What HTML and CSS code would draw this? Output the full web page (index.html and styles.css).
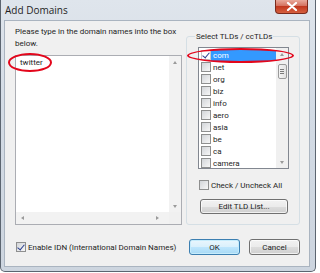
FILE: index.html
```html
<!DOCTYPE html>
<html lang="en">
<head>
  <meta charset="UTF-8">
  <meta name="viewport" content="width=device-width, initial-scale=1.0">
  <title>Add Domains</title>
  <link rel="stylesheet" href="styles.css">
</head>
<body>
  <!-- Dialog Window -->
  <div class="window">
    <div class="title-bar">
      <span class="title">Add Domains</span>
      <span class="close-btn">
        <svg width="12" height="9" viewBox="0 0 12 9"><path d="M2 1 L10 8 M10 1 L2 8" stroke="#fff" stroke-width="2.2" stroke-linecap="round"/></svg>
      </span>
    </div>

    <div class="client">
      <div class="main">
        <!-- Domain names -->
        <div class="left-col">
          <p class="hint">Please type in the domain names into the box below.</p>
          <div class="textbox">
            <div class="text-area">
              <div class="text-lines">twitter</div>
              <div class="vscroll">
                <span class="arrow up"></span>
                <span class="arrow down"></span>
              </div>
            </div>
            <div class="hscroll">
              <span class="arrow left"></span>
              <span class="arrow right"></span>
              <span class="corner"></span>
            </div>
          </div>
          <span class="mark mark-twitter"></span>
        </div>

        <!-- TLD group -->
        <div class="group">
          <span class="group-title">Select TLDs / ccTLDs</span>
          <div class="listbox">
            <ul class="tld-list">
              <li class="selected"><span class="check checked"></span><span class="tld">com</span></li>
              <li><span class="check"></span><span class="tld">net</span></li>
              <li><span class="check"></span><span class="tld">org</span></li>
              <li><span class="check"></span><span class="tld">biz</span></li>
              <li><span class="check"></span><span class="tld">info</span></li>
              <li><span class="check"></span><span class="tld">aero</span></li>
              <li><span class="check"></span><span class="tld">asia</span></li>
              <li><span class="check"></span><span class="tld">be</span></li>
              <li><span class="check"></span><span class="tld">ca</span></li>
              <li><span class="check"></span><span class="tld">camera</span></li>
              <li><span class="check"></span><span class="tld">cat</span></li>
            </ul>
            <div class="list-scroll">
              <span class="arrow up"></span>
              <span class="thumb"><i></i><i></i><i></i></span>
              <span class="arrow down"></span>
            </div>
          </div>
          <label class="check-row"><span class="check"></span>Check / Uncheck All</label>
          <button class="btn btn-edit">Edit TLD List...</button>
          <span class="mark mark-com"></span>
        </div>
      </div>

      <div class="bottom">
        <label class="check-row idn"><span class="check checked"></span>Enable IDN (International Domain Names)</label>
        <div class="actions">
          <button class="btn btn-default">OK</button>
          <button class="btn">Cancel</button>
        </div>
      </div>
    </div>
  </div>
</body>
</html>
```

FILE: styles.css
```css
/* General Styles */
body {
  margin: 0;
  padding: 0;
  background-color: #fff;
  font-family: Roboto, "Noto Sans", sans-serif;
  font-size: 8px;
  color: #1e1e1e;
}

/* Window Frame */
.window {
  width: 316px;
  height: 272px;
  box-sizing: border-box;
  background: linear-gradient(#dfe5ec, #d3dbe5 40%, #cdd5df);
  border: 1px solid #5c6570;
  border-top: none;
  border-radius: 0 0 5px 5px;
  display: flex;
  flex-direction: column;
  padding: 0 5px 4px 3px;
}

.title-bar {
  height: 20px;
  display: flex;
  justify-content: space-between;
  align-items: flex-start;
  flex-shrink: 0;
}

.title {
  font-family: "Open Sans", sans-serif;
  font-size: 10px;
  color: #1f1f1f;
  padding: 3px 0 0 1px;
}

.close-btn {
  width: 33px;
  height: 14px;
  margin-right: 2px;
  box-sizing: border-box;
  display: flex;
  justify-content: center;
  align-items: center;
  border: 1px solid #7a2a1c;
  border-top: none;
  border-radius: 0 0 4px 4px;
  background: linear-gradient(#e9a99b, #d4725f 45%, #c2381f 50%, #d5603f);
}

/* Client Area */
.client {
  flex: 1;
  background-color: #f0f0f0;
  border: 1px solid #aab4c0;
  display: flex;
  flex-direction: column;
  padding: 5px 9px 0 10px;
}

.main {
  display: flex;
  gap: 4px;
}

.left-col {
  width: 167px;
  position: relative;
}

.hint {
  margin: 0;
  width: 172px;
  line-height: 12px;
  height: 29px;
}

/* Text Box */
.textbox {
  height: 168px;
  border: 1px solid #abadb3;
  background: #fff;
  display: flex;
  flex-direction: column;
}

.text-area {
  flex: 1;
  display: flex;
}

.text-lines {
  flex: 1;
  padding: 2px 0 0 4px;
}

.vscroll {
  width: 12px;
  background: #f2f2f2;
  display: flex;
  flex-direction: column;
  justify-content: space-between;
  align-items: center;
  padding: 5px 0 4px;
}

.hscroll {
  height: 12px;
  background: #f2f2f2;
  display: flex;
  align-items: center;
  padding-left: 5px;
}

.hscroll .right {
  margin-left: auto;
  margin-right: 10px;
}

.hscroll .corner {
  width: 12px;
  height: 12px;
  background: #f0f0f0;
}

.arrow {
  width: 0;
  height: 0;
  border: 2px solid transparent;
}

.arrow.up { border-bottom: 3px solid #9a9a9a; border-top: 0; }
.arrow.down { border-top: 3px solid #9a9a9a; border-bottom: 0; }
.arrow.left { border-right: 3px solid #9a9a9a; border-left: 0; }
.arrow.right { border-left: 3px solid #9a9a9a; border-right: 0; }

/* TLD Group */
.group {
  flex: 1;
  margin-top: 10px;
  height: 189px;
  box-sizing: border-box;
  padding: 0 9px 0 11px;
  border: 1px solid #d5dfe5;
  border-radius: 3px;
  position: relative;
  display: flex;
  flex-direction: column;
  align-items: flex-start;
}

.group-title {
  background: #f0f0f0;
  padding: 0 1px;
  margin: -6px 0 0 -3px;
  line-height: 11px;
}

.listbox {
  width: 89px;
  height: 120px;
  border: 1px solid #828790;
  background: #fff;
  display: flex;
  margin-top: 5px;
}

.tld-list {
  list-style: none;
  margin: 0;
  padding: 1px 0 0;
  flex: 1;
  overflow: hidden;
}

.tld-list li {
  height: 12px;
  display: flex;
  align-items: center;
  padding-left: 2px;
}

.tld {
  flex: 1;
  padding-left: 2px;
  line-height: 11px;
}

.tld-list li.selected .tld {
  background: #3399ff;
  color: #fff;
}

.list-scroll {
  width: 12px;
  background: #f0f0f0;
  display: flex;
  flex-direction: column;
  align-items: center;
  padding: 5px 0 4px;
}

.list-scroll .thumb {
  width: 9px;
  height: 15px;
  box-sizing: border-box;
  margin-top: 8px;
  border: 1px solid #9a9a9a;
  border-radius: 2px;
  background: linear-gradient(90deg, #f4f4f4, #e2e2e2);
  display: flex;
  flex-direction: column;
  justify-content: center;
  align-items: center;
  gap: 1px;
}

.list-scroll .thumb i {
  width: 4px;
  height: 1px;
  background: #7a7a7a;
}

.list-scroll .down {
  margin-top: auto;
}

/* Checkboxes */
.check {
  width: 10px;
  height: 10px;
  box-sizing: border-box;
  border: 1px solid #8e8f8f;
  background: linear-gradient(135deg, #d2d5d9, #f7f7f7);
  flex-shrink: 0;
  position: relative;
}

.check.checked::after {
  content: "";
  position: absolute;
  left: 2px;
  top: 0;
  width: 3px;
  height: 6px;
  border: solid #2a3f8f;
  border-width: 0 1.5px 1.5px 0;
  transform: rotate(40deg);
}

.tld-list li.selected .check {
  border-color: #c8c8c8;
  background: #fff;
}

.check-row {
  display: flex;
  align-items: center;
  gap: 2px;
  white-space: nowrap;
}

.group .check-row {
  margin: 11px 0 0 1px;
}

/* Buttons */
.btn {
  font-family: inherit;
  font-size: 8px;
  color: #1e1e1e;
  height: 16px;
  padding: 0;
  border: 1px solid #707070;
  border-radius: 3px;
  background: linear-gradient(#f2f2f2, #ebebeb 50%, #dddddd 51%, #cfcfcf);
  box-shadow: inset 0 0 0 1px rgba(255, 255, 255, 0.7);
}

.btn-edit {
  width: 88px;
  height: 15px;
  margin: 9px 0 0 2px;
}

.btn-default {
  border-color: #3c7fb1;
  background: linear-gradient(#eaf6fd, #d9f0fc 50%, #bee6fd 51%, #a7d9f5);
  box-shadow: inset 0 0 0 1px #c6ecfc;
}

.bottom {
  display: flex;
  justify-content: space-between;
  align-items: center;
  margin-top: 14px;
}

.idn {
  margin-left: 1px;
}

.actions {
  display: flex;
  gap: 9px;
}

.actions .btn {
  width: 51px;
}

/* Red annotation marks */
.mark {
  position: absolute;
  border: 2px solid #e3061b;
  border-radius: 50%;
  pointer-events: none;
}

.mark-twitter {
  left: -7px;
  top: 27px;
  width: 40px;
  height: 15px;
}

.mark-com {
  left: 0;
  top: 11px;
  width: 103px;
  height: 11px;
}
```
